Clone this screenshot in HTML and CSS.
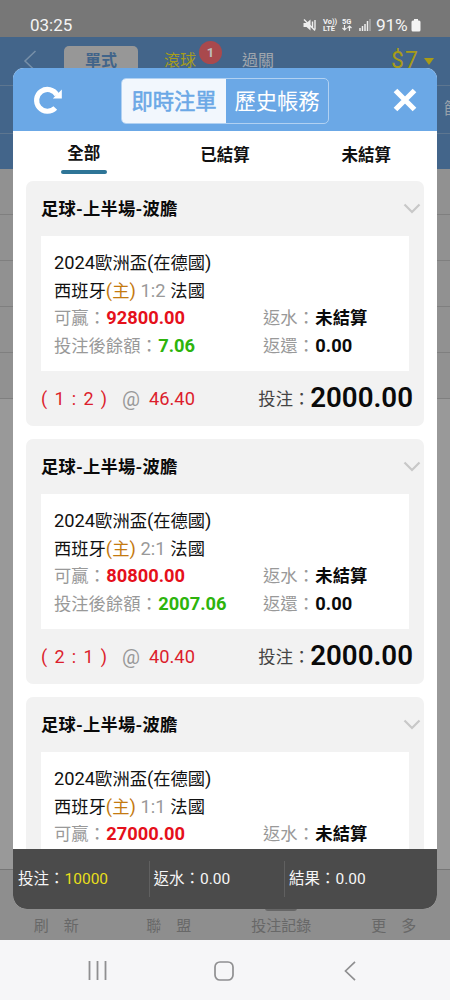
FILE: index.html
```html
<!DOCTYPE html>
<html lang="zh-Hant">
<head>
<meta charset="utf-8">
<title>即時注單</title>
<link rel="stylesheet" href="styles.css">
</head>
<body>
<div class="screen">
  <div class="status">
    <span class="clock">03:25</span>
    <svg class="mute" width="14" height="14" viewBox="0 0 14 14"><path d="M.5 5h3l4-3.500v11L3.500 9h-3z" fill="#eee"/><path d="M1 1.500l11 11M9.500 3.500v6.500M12 2v9.500" stroke="#eee" stroke-width="1.400" fill="none"/></svg>
    <span class="tiny volte">Vo))<br>LTE</span>
    <span class="tiny five">5G<svg width="10" height="6" viewBox="0 0 10 6"><path d="M2.500 0v5M.5 3l2 2 2-2M7.500 6V1M5.500 3l2-2 2 2" fill="none" stroke="#eee" stroke-width="1.200"/></svg></span>
    <svg class="signal" width="12" height="12" viewBox="0 0 12 12"><path d="M1 12V9M3.500 12V7M6 12V5M8.500 12V2" stroke="#eee" stroke-width="1.500"/><path d="M11 12V0" stroke="#aaa" stroke-width="1.500"/></svg>
    <span class="percent">91%</span>
    <svg class="battery" width="10" height="13" viewBox="0 0 10 13"><path d="M3 0h4v1.500h1q1.500 0 1.500 1.500v8q0 1.500-1.500 1.500H2Q.5 12.500.5 11V3Q.5 1.500 2 1.500h1z" fill="#f4f4f4"/></svg>
  </div>
  <div class="topbar">
    <svg class="back" width="14" height="22" viewBox="0 0 14 22"><path d="M12.500 1L2 11l10.500 10" fill="none" stroke="#7890a8" stroke-width="1.500"/></svg>
    <span class="mode active">單式</span>
    <span class="mode live">滾球<b class="badge">1</b></span>
    <span class="mode">過關</span>
    <span class="money">$7</span>
    <svg class="drop" width="10" height="7" viewBox="0 0 10 7"><path d="M0 0h10L5 7z" fill="#a99b17"/></svg>
  </div>
  <div class="subbar"><span>篩</span></div>
  <div class="bluefill"></div>
  <div class="rows"><i></i><i></i><i></i><i></i><i></i></div>
  <div class="blank"></div>
  <div class="bottombar">
    <span>刷　新</span><span>聯　盟</span><span class="record">投注記錄</span><span>更　多</span>
  </div>
  <div class="sysnav">
    <svg width="20" height="20" viewBox="0 0 20 20"><path d="M1.500 0v19M9.500 0v19M17.500 0v19" stroke="#8f8f91" stroke-width="1.800"/></svg>
    <svg width="20" height="20" viewBox="0 0 20 20"><rect x="1" y="1" width="18" height="18" rx="5" fill="none" stroke="#8f8f91" stroke-width="1.700"/></svg>
    <svg width="12" height="20" viewBox="0 0 12 20"><path d="M11 .8L1.500 10l9.500 9.200" fill="none" stroke="#8f8f91" stroke-width="1.700"/></svg>
  </div>

  <section class="modal">
    <header class="head">
      <svg class="reload" width="30" height="30" viewBox="0 0 30 30"><path d="M24 10A10.900 10.900 0 1 0 22.300 23" fill="none" stroke="#fff" stroke-width="5.200"/><path d="M28.800 4.500v8.900h-9z" fill="#fff"/></svg>
      <div class="switch"><span class="on">即時注單</span><span>歷史帳務</span></div>
      <svg class="close" width="24" height="24" viewBox="0 0 24 24"><path d="M2.500 2.500l19 19M21.500 2.500l-19 19" stroke="#fff" stroke-width="5.200"/></svg>
    </header>
    <nav class="tabs"><span class="current">全部</span><span>已結算</span><span>未結算</span></nav>
    <div class="list">
      <article class="card">
        <h2>足球-上半場-波膽<svg width="18" height="11" viewBox="0 0 18 11"><path d="M1.500 1.500L9 9l7.500-7.500" fill="none" stroke="#c8c8c8" stroke-width="2.200"/></svg></h2>
        <div class="detail">
          <p><span class="num">2024</span>歐洲盃<span class="num">(</span>在德國<span class="num">)</span></p>
          <p>西班牙<em><span class="num">(</span>主<span class="num">)</span></em> <i class="num">1:2</i> 法國</p>
          <div class="pair"><p><i>可贏：</i><b class="num red">92800.00</b></p><p><i>返水：</i><b>未結算</b></p></div>
          <div class="pair"><p><i>投注後餘額：</i><b class="num green">7.06</b></p><p><i>返還：</i><b class="num">0.00</b></p></div>
        </div>
        <div class="stake"><span class="score">( 1 : 2 )</span><span class="at">@</span><span class="odds">46.40</span><span class="label">投注：</span><b>2000.00</b></div>
      </article>
      <article class="card">
        <h2>足球-上半場-波膽<svg width="18" height="11" viewBox="0 0 18 11"><path d="M1.500 1.500L9 9l7.500-7.500" fill="none" stroke="#c8c8c8" stroke-width="2.200"/></svg></h2>
        <div class="detail">
          <p><span class="num">2024</span>歐洲盃<span class="num">(</span>在德國<span class="num">)</span></p>
          <p>西班牙<em><span class="num">(</span>主<span class="num">)</span></em> <i class="num">2:1</i> 法國</p>
          <div class="pair"><p><i>可贏：</i><b class="num red">80800.00</b></p><p><i>返水：</i><b>未結算</b></p></div>
          <div class="pair"><p><i>投注後餘額：</i><b class="num green">2007.06</b></p><p><i>返還：</i><b class="num">0.00</b></p></div>
        </div>
        <div class="stake"><span class="score">( 2 : 1 )</span><span class="at">@</span><span class="odds">40.40</span><span class="label">投注：</span><b>2000.00</b></div>
      </article>
      <article class="card">
        <h2>足球-上半場-波膽<svg width="18" height="11" viewBox="0 0 18 11"><path d="M1.500 1.500L9 9l7.500-7.500" fill="none" stroke="#c8c8c8" stroke-width="2.200"/></svg></h2>
        <div class="detail">
          <p><span class="num">2024</span>歐洲盃<span class="num">(</span>在德國<span class="num">)</span></p>
          <p>西班牙<em><span class="num">(</span>主<span class="num">)</span></em> <i class="num">1:1</i> 法國</p>
          <div class="pair"><p><i>可贏：</i><b class="num red">27000.00</b></p><p><i>返水：</i><b>未結算</b></p></div>
        </div>
      </article>
    </div>
    <footer class="totals"><span>投注：<b>10000</b></span><span>返水：0.00</span><span>結果：0.00</span></footer>
  </section>
</div>
</body>
</html>
```
FILE: styles.css
```css
* { box-sizing: border-box; }
body { margin: 0; font-family: Roboto, "Noto Sans CJK TC", sans-serif; color: #111; }
p, h2 { margin: 0; }
i, em { font-style: normal; }
svg { display: block; flex: none; }
.screen { position: relative; width: 450px; height: 1000px; overflow: hidden; display: flex; flex-direction: column; background: #989898; }
.screen > * { flex: none; }

.status { height: 37px; background: #777; display: flex; align-items: center; padding: 13px 0 0 30px; color: #f4f4f4; }
.status > * { flex: none; }
.clock { font: 17px/24px Roboto, sans-serif; width: 273px; }
.tiny { font: 700 7.500px/7px Roboto, sans-serif; height: 14px; }
.volte { margin-left: 6px; width: 19px; }
.five { width: 17px; }
.signal { margin-right: 5px; }
.percent { font: 17.300px/24px Roboto, sans-serif; width: 35px; letter-spacing: -.2px; }

.topbar { height: 49px; background: #43658a; border-bottom: 1px solid #5d7690; display: flex; align-items: center; padding-left: 23px; color: #a0a6ad; font-size: 16px; }
.back { margin-right: 27px; }
.mode { position: relative; line-height: 30px; margin-right: 46px; }
.active { background: #979797; color: #41648a; font-weight: 700; width: 74px; height: 31px; border-radius: 5px; text-align: center; margin-right: 26px; }
.live { color: #a69d1c; }
.badge { position: absolute; left: 35px; top: -5px; width: 23px; height: 23px; border-radius: 50%; background: #a9494d; color: #bdbdbd; font-size: 13px; line-height: 23px; text-align: center; }
.money { margin-left: 71px; font-size: 23px; letter-spacing: 1px; color: #a79b18; line-height: 28px; }
.drop { margin-left: 5px; }
.subbar { height: 48px; background: #43658a; border-bottom: 1px solid #5d7690; color: #98a1aa; font-size: 16px; line-height: 46px; padding-left: 444px; white-space: nowrap; overflow: hidden; }
.bluefill { height: 35px; background: #43658a; }
.rows i { display: block; height: 46px; background: #919191; border-bottom: 1px solid #7f7f7f; }
.blank { height: 470px; background: #999; }
.bottombar { height: 71px; background: #8e8e8e; border-top: 1px solid #767676; display: grid; grid-template-columns: repeat(4, 1fr); align-items: end; text-align: center; padding-bottom: 2px; color: #686868; font-size: 15px; line-height: 24px; }
.record { position: relative; }
.record::before { content: ""; position: absolute; left: 40px; top: -28px; width: 32px; height: 25px; background: #666; border-radius: 3px; }
.sysnav { height: 60px; background: #f6f6f8; display: flex; align-items: center; padding: 2px 0 0 88px; }
.sysnav svg + svg { margin-left: 106px; }
.sysnav svg:last-child { margin-left: 110px; }

.modal { position: absolute; left: 13px; top: 68px; width: 424px; height: 841px; background: #fff; border-radius: 11px 11px 14px 14px; overflow: hidden; display: flex; flex-direction: column; }
.head { flex: none; height: 63px; background: #6ba8e6; display: flex; align-items: center; padding-left: 20px; }
.switch { display: grid; grid-template-columns: 104px 102px; height: 46px; border: 1px solid #b1d1f2; border-radius: 5px; overflow: hidden; margin: 2px 64px 0 58px; color: #fff; font-size: 21.300px; line-height: 45px; text-align: center; }
.on { background: #f2f7fd; color: #6ba8e6; -webkit-text-stroke: .6px #6ba8e6; }
.tabs { flex: none; height: 50px; display: grid; grid-template-columns: repeat(3, 1fr); justify-items: center; font-size: 16.500px; font-weight: 700; line-height: 24px; padding-top: 12px; color: #111; }
.tabs span + span { padding-top: 1px; }
.current { margin-top: -1px; height: 32px; width: 46px; text-align: center; position: relative; }
.current::after { content: ""; position: absolute; left: 0; bottom: 0; width: 46px; height: 4px; border-radius: 2px; background: #2e7597; }
.list { height: 668px; overflow: hidden; }
.card { height: 245px; margin: 0 13px 13px; background: #f2f2f2; border-radius: 7px; padding: 0 15px; font-size: 17.300px; }
.card h2 { height: 55px; font-size: 17.300px; letter-spacing: .2px; line-height: 54px; display: flex; justify-content: space-between; align-items: center; margin-right: -12px; color: #0a0a0a; }
.detail { height: 135px; background: #fff; padding: 14px 13px 0; }
.detail p { height: 27.500px; line-height: 27.500px; white-space: nowrap; word-spacing: .5px; }
.detail .num { font-size: 18.300px; line-height: 1; }
.detail i { color: #999; }
.detail em { color: #c47a10; }
.pair { display: grid; grid-template-columns: 209px 1fr; }
.pair b { color: #0a0a0a; font-weight: 700; margin-left: .5px; }
.pair .red { color: #e5101b; }
.pair .green { color: #2db40c; }
.stake { height: 55px; display: flex; align-items: center; line-height: 54px; white-space: nowrap; margin-right: -4px; }
.score { width: 81px; letter-spacing: 1.400px; color: #dc1e2d; font-size: 18px; }
.at { width: 27px; color: #999; font-size: 20px; }
.odds { color: #dc1e2d; font-size: 18.300px; }
.label { margin-left: auto; color: #444; }
.stake b { font-size: 27.700px; color: #0a0a0a; font-weight: 600; position: relative; top: -1px; }
.totals { flex: none; height: 60px; background: #4b4b4b; color: #f6f6f6; display: grid; grid-template-columns: 135.500px 135.500px 1fr; align-items: center; font-size: 15.500px; line-height: 36px; }
.totals span { padding-left: 5px; }
.totals span + span { border-left: 1px solid #606060; padding-left: 4px; }
.totals b { font-weight: 400; color: #e8df1b; }
```
